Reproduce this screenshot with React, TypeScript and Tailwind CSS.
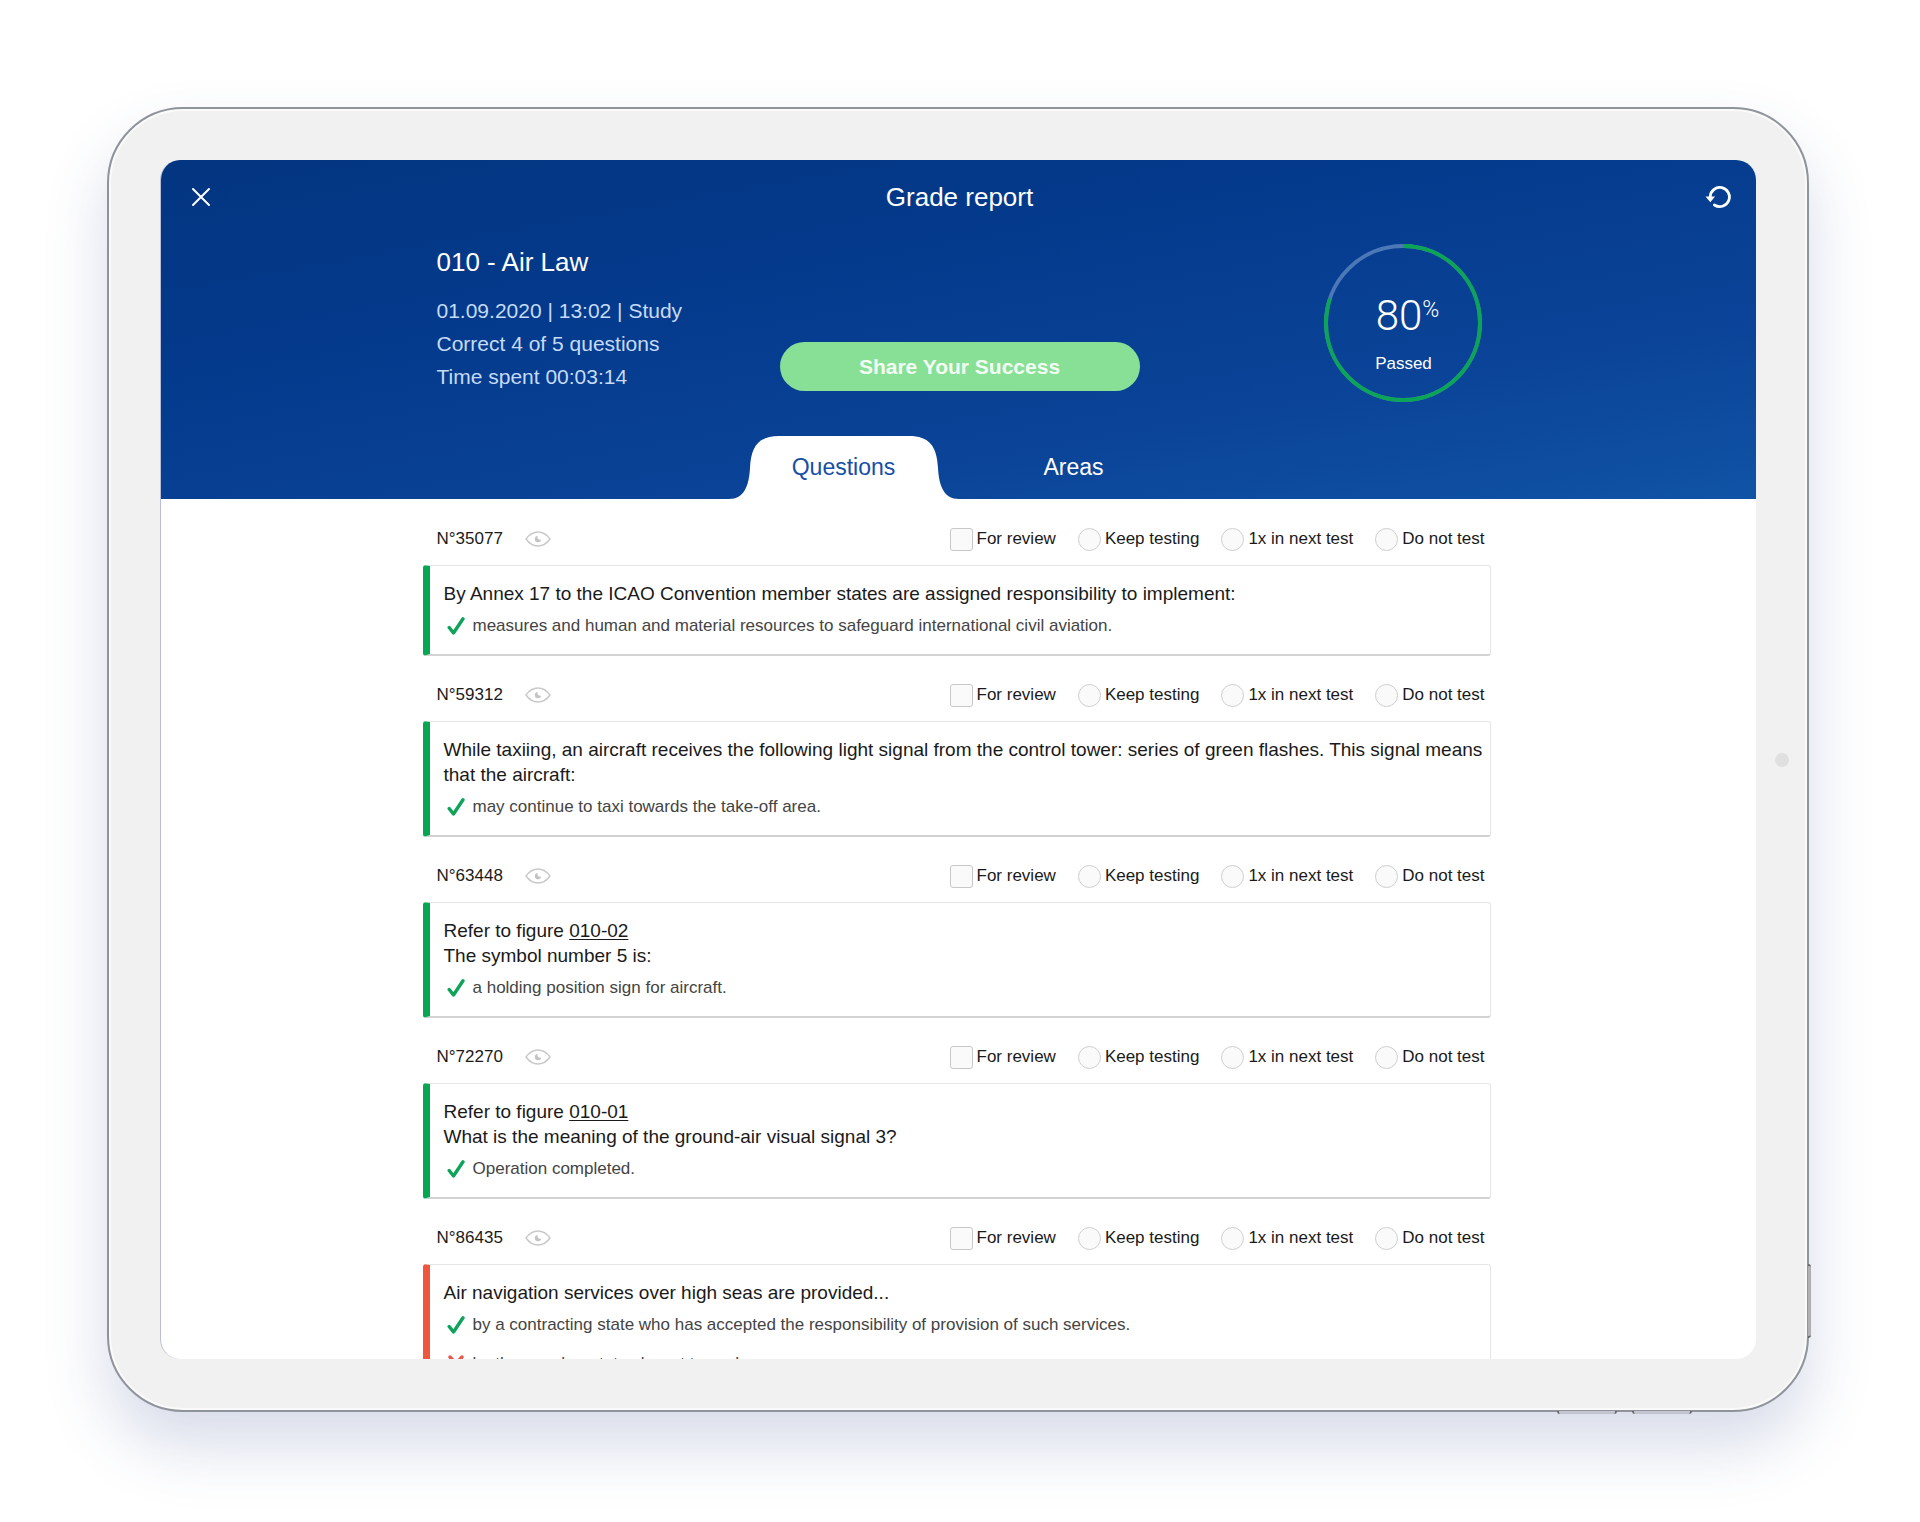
import { useState } from 'react';

interface Answer {
  text: string;
  correct: boolean;
}

interface Question {
  id: string;
  figure?: string;
  text: string;
  passed: boolean;
  answers: Answer[];
}

const questions: Question[] = [
  {
    id: '35077',
    text: 'By Annex 17 to the ICAO Convention member states are assigned responsibility to implement:',
    passed: true,
    answers: [
      { text: 'measures and human and material resources to safeguard international civil aviation.', correct: true },
    ],
  },
  {
    id: '59312',
    text: 'While taxiing, an aircraft receives the following light signal from the control tower: series of green flashes. This signal means that the aircraft:',
    passed: true,
    answers: [{ text: 'may continue to taxi towards the take-off area.', correct: true }],
  },
  {
    id: '63448',
    figure: '010-02',
    text: 'The symbol number 5 is:',
    passed: true,
    answers: [{ text: 'a holding position sign for aircraft.', correct: true }],
  },
  {
    id: '72270',
    figure: '010-01',
    text: 'What is the meaning of the ground-air visual signal 3?',
    passed: true,
    answers: [{ text: 'Operation completed.', correct: true }],
  },
  {
    id: '86435',
    text: 'Air navigation services over high seas are provided...',
    passed: false,
    answers: [
      { text: 'by a contracting state who has accepted the responsibility of provision of such services.', correct: true },
      { text: 'by the member state closest to such area.', correct: false },
    ],
  },
];

const schedules = ['Keep testing', '1x in next test', 'Do not test'];

const CloseIcon = () => (
  <svg viewBox="0 0 20 20" className="w-5 h-5" fill="none" stroke="currentColor" strokeWidth="2" strokeLinecap="round">
    <path d="M2 2l16 16M18 2L2 18" />
  </svg>
);

const RestartIcon = () => (
  <svg viewBox="0 0 26 24" className="w-[26px] h-6" fill="none">
    <path d="M5.2 12a9.6 9.6 0 1 1 4.2 8" stroke="currentColor" strokeWidth="2.8" strokeLinecap="round" />
    <path d="M0.500 11.500h9.600l-4.800 5.800z" fill="currentColor" />
  </svg>
);

const EyeIcon = () => (
  <svg viewBox="0 0 26 16" className="w-[26px] h-4" fill="none">
    <path
      d="M1 8c3-4.200 7.200-7 12-7s9 2.800 12 7c-3 4.200-7.200 7-12 7S4 12.200 1 8z"
      stroke="#c9c9c9"
      strokeWidth="1.500"
      strokeLinejoin="round"
    />
    <path d="M12.600 5a3.200 3.200 0 1 0 3.600 3.600c-2 .8-4.400-1-3.600-3.600z" fill="#c4c4c4" />
  </svg>
);

const CheckIcon = () => (
  <svg viewBox="0 0 18 20" className="w-[18px] h-5" fill="none" stroke="#0fa35a" strokeWidth="3.400" strokeLinecap="round" strokeLinejoin="round">
    <path d="M2.200 11.500l4.300 5.500L16 2.800" />
  </svg>
);

const CrossIcon = () => (
  <svg viewBox="0 0 18 20" className="w-[18px] h-5" fill="none" stroke="#e8564a" strokeWidth="3.400" strokeLinecap="round">
    <path d="M3 3l12 13M15 3L3 16" />
  </svg>
);

const ScoreRing = ({ score }: { score: number }) => {
  const length = 2 * Math.PI * 77;

  return (
    <div className="relative w-[158px] h-[158px] text-white">
      <svg viewBox="0 0 158 158" className="absolute inset-0 -rotate-90" fill="none" strokeWidth="4">
        <circle cx="79" cy="79" r="77" stroke="#4d78b8" />
        <circle cx="79" cy="79" r="77" stroke="#0ca557" strokeDasharray={`${(length * score) / 100} ${length}`} />
      </svg>
      <div className="relative flex flex-col items-center pt-12">
        <p className="flex items-start pl-2 font-['Roboto'] font-light text-[42px] leading-[48px]">
          {score}
          <span className="text-[23px] leading-9">%</span>
        </p>
        <p className="mt-3 text-[17px] leading-6">Passed</p>
      </div>
    </div>
  );
};

const QuestionCard = ({ question }: { question: Question }) => (
  <article className="mb-[26px]">
    <div className="flex items-center justify-between h-[26px] mb-[13px] pl-[14px] pr-[6px] text-[17px]">
      <div className="flex items-center gap-[22px]">
        <span>N°{question.id}</span>
        <button type="button" aria-label="Preview question">
          <EyeIcon />
        </button>
      </div>
      <div className="flex items-center gap-[22px]">
        <label className="flex items-center gap-1">
          <input
            type="checkbox"
            className="appearance-none w-[23px] h-[23px] rounded-[3px] border border-[#c8c8c8] bg-[#fafafa] checked:bg-[#0b4aa2]"
          />
          For review
        </label>
        {schedules.map((schedule) => (
          <label key={schedule} className="flex items-center gap-1">
            <input
              type="radio"
              name={`schedule-${question.id}`}
              className="appearance-none w-[23px] h-[23px] rounded-full border border-[#cfcfcf] bg-[#fafafa] checked:bg-[#0b4aa2]"
            />
            {schedule}
          </label>
        ))}
      </div>
    </div>
    <div
      className={`rounded-[3px] border border-l-[7px] border-b-2 border-[#e6e6e6] border-b-[#d2d2d2] pl-[14px] pr-1 pt-[15px] pb-[14px] ${
        question.passed ? 'border-l-[#07a652]' : 'border-l-[#f0553d]'
      }`}
    >
      <h2 className="text-[19px] leading-[25px]">
        {question.figure && (
          <span className="block">
            Refer to figure{' '}
            <a href="#figure" className="underline underline-offset-2">
              {question.figure}
            </a>
          </span>
        )}
        {question.text}
      </h2>
      <ul className="mt-[6px] space-y-[11px]">
        {question.answers.map((answer) => (
          <li key={answer.text} className="flex items-center gap-2 pl-[3px] text-[17px] leading-7 text-[#444]">
            {answer.correct ? <CheckIcon /> : <CrossIcon />}
            {answer.text}
          </li>
        ))}
      </ul>
    </div>
  </article>
);

export default function App() {
  const [tab, setTab] = useState('questions');

  return (
    <div className="bg-white pl-[107px] pr-[111px] py-[107px] font-['Liberation_Sans',Arial,sans-serif] text-[#1a1a1a]">
      {/* Tablet body */}
      <div className="relative rounded-[76px] border-2 border-[#8f939c] bg-[#f1f1f1] p-[51px] shadow-[inset_0_0_0_2px_#fafafa,0_34px_64px_rgba(60,80,150,0.2)]">
        <div className="absolute -right-1 bottom-[72px] h-[74px] w-[3px] rounded-r border-y-2 border-[#666] bg-[#b0b0b4]" />
        <div className="absolute -bottom-1 right-[190px] h-[3px] w-[60px] rounded-b border-x-2 border-[#666] bg-[#c2c5d0]" />
        <div className="absolute -bottom-1 right-[115px] h-[3px] w-[60px] rounded-b border-x-2 border-[#666] bg-[#c2c5d0]" />
        <div className="absolute right-[18px] top-1/2 h-[14px] w-[14px] -translate-y-1/2 rounded-full bg-[#e0e0e0]" />

        <main className="aspect-[1596/1199] overflow-hidden rounded-[20px] border-l border-[#b9bcd6] bg-white">
          {/* Header */}
          <header className="bg-[linear-gradient(170deg,#033580_0%,#043a8c_35%,#0a4397_70%,#1053a5_100%)]">
            <div className="flex items-center justify-between pl-6 pr-[22px] pt-[17px] text-white">
              <button type="button" aria-label="Close" className="w-8 flex justify-center">
                <CloseIcon />
              </button>
              <h1 className="text-[26px] leading-10">Grade report</h1>
              <button type="button" aria-label="Restart test" className="w-8 flex justify-center">
                <RestartIcon />
              </button>
            </div>

            <div className="mx-auto grid max-w-[1072px] grid-cols-3 pt-6 pl-[14px] pr-3">
              <div className="pt-[3px] text-[21px] leading-[33px] text-[#c5dbf7]">
                <h2 className="mb-[14px] text-[26px] leading-9 text-white">010 - Air Law</h2>
                <p>01.09.2020 | 13:02 | Study</p>
                <p>Correct 4 of 5 questions</p>
                <p>Time spent 00:03:14</p>
              </div>
              <button
                type="button"
                className="self-end justify-self-center mb-[11px] h-[49px] w-[360px] rounded-full bg-[#87e095] text-[21px] font-bold text-[#f3fff3]"
              >
                Share Your Success
              </button>
              <div className="justify-self-end pt-[3px]">
                <ScoreRing score={80} />
              </div>
            </div>

            <nav className="mx-auto mt-[34px] grid w-[460px] grid-cols-2 text-[23px]">
              {['Questions', 'Areas'].map((name) => {
                const active = tab === name.toLowerCase();
                return (
                  <button
                    key={name}
                    type="button"
                    onClick={() => setTab(name.toLowerCase())}
                    className={`relative h-[63px] ${active ? 'text-[#164fa6]' : 'text-white'}`}
                  >
                    {active && (
                      <svg viewBox="0 0 230 63" className="absolute inset-0" fill="#fff">
                        <path d="M0 63C15 63 20 50 21 32C22 10 30 0 50 0H180C200 0 208 10 209 32C210 50 215 63 230 63Z" />
                      </svg>
                    )}
                    <span className="relative">{name}</span>
                  </button>
                );
              })}
            </nav>
          </header>

          {/* Answered questions */}
          <section className="mx-auto max-w-[1072px] pt-[27px] pr-1">
            {questions.map((question) => (
              <QuestionCard key={question.id} question={question} />
            ))}
          </section>
        </main>
      </div>
    </div>
  );
}
